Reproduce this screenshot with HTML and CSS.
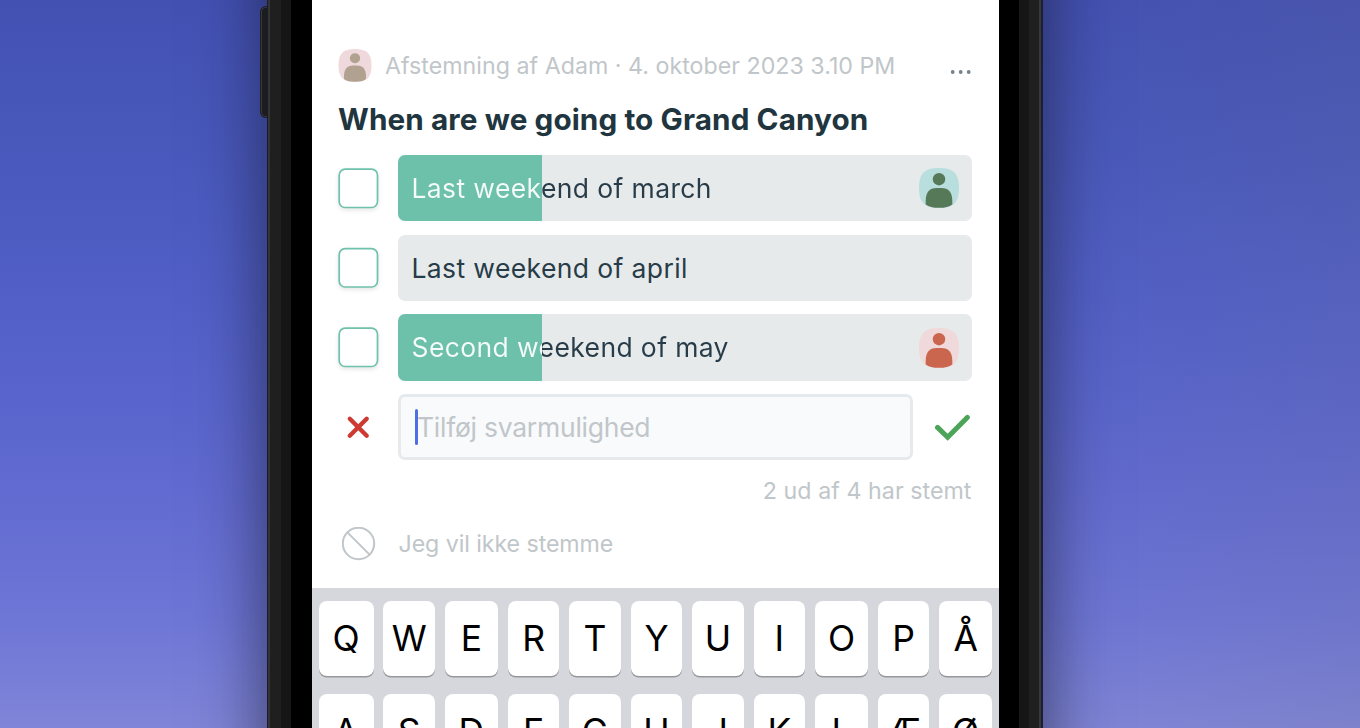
FILE: index.html
```html
<!DOCTYPE html>
<html lang="da">
<head>
<meta charset="utf-8">
<title>Afstemning</title>
<link rel="stylesheet" href="styles.css">
</head>
<body>
<svg class="defs" width="0" height="0" aria-hidden="true">
  <symbol id="person" viewBox="0 0 40 40">
    <path class="tile" d="M20 0C34.500 0 40 5.500 40 20S34.500 40 20 40 0 34.500 0 20 5.500 0 20 0Z"/>
    <circle cx="20" cy="11.200" r="6.200"/>
    <path d="M6.700 32.500C6.700 24.500 10.500 20 17.500 20H22.500C29.500 20 33.300 24.500 33.300 32.500V36.500C30.300 39 26 39.800 20 39.800S9.700 39 6.700 36.500Z"/>
  </symbol>
</svg>
<main class="stage">
  <div class="phone">
    <span class="side-button"></span>
    <div class="screen">
      <section class="poll">
        <header class="meta">
          <svg class="avatar avatar-small tan"><use href="#person"/></svg>
          <span class="byline">Afstemning af Adam · 4. oktober 2023 3.10 PM</span>
          <svg class="more" width="22" height="6" viewBox="0 0 22 6"><circle cx="2.700" cy="3" r="1.900"/><circle cx="10.700" cy="3" r="1.900"/><circle cx="18.700" cy="3" r="1.900"/></svg>
        </header>
        <h1 class="title">When are we going to Grand Canyon</h1>
        <div class="options">
          <div class="option">
            <svg class="checkbox" width="41" height="41" viewBox="0 0 41 41"><rect x="1.200" y="1.200" width="38.300" height="38.300" rx="6"/></svg>
            <div class="bar voted"><span class="label march">Last weekend of march</span><svg class="avatar green"><use href="#person"/></svg></div>
          </div>
          <div class="option">
            <svg class="checkbox" width="41" height="41" viewBox="0 0 41 41"><rect x="1.200" y="1.700" width="38.300" height="38.300" rx="6"/></svg>
            <div class="bar"><span class="label">Last weekend of april</span></div>
          </div>
          <div class="option">
            <svg class="checkbox" width="41" height="41" viewBox="0 0 41 41"><rect x="1.200" y="1.200" width="38.300" height="38.300" rx="6"/></svg>
            <div class="bar voted"><span class="label may">Second weekend of may</span><svg class="avatar red"><use href="#person"/></svg></div>
          </div>
          <div class="option">
            <span class="cancel"><svg width="24" height="24" viewBox="0 0 24 24"><path d="M3.800 3.800L20.700 20.700M20.700 3.800L3.800 20.700"/></svg></span>
            <div class="field"><span class="caret"></span><span class="placeholder">Tilføj svarmulighed</span></div>
            <svg class="confirm" width="38" height="28" viewBox="0 0 38 28"><path d="M3.500 14.400L13.700 24.300L33.300 4.400"/></svg>
          </div>
        </div>
        <p class="tally">2 ud af 4 har stemt</p>
        <div class="abstain">
          <svg width="34" height="34" viewBox="0 0 34 34"><circle cx="16.500" cy="16.500" r="15.700"/><path d="M5.400 5.400L27.600 27.600"/></svg>
          <span>Jeg vil ikke stemme</span>
        </div>
      </section>
      <div class="keyboard">
        <kbd>Q</kbd><kbd>W</kbd><kbd>E</kbd><kbd>R</kbd><kbd>T</kbd><kbd>Y</kbd><kbd>U</kbd><kbd>I</kbd><kbd>O</kbd><kbd>P</kbd><kbd>Å</kbd>
        <kbd>A</kbd><kbd>S</kbd><kbd>D</kbd><kbd>F</kbd><kbd>G</kbd><kbd>H</kbd><kbd>J</kbd><kbd>K</kbd><kbd>L</kbd><kbd>Æ</kbd><kbd>Ø</kbd>
      </div>
    </div>
  </div>
</main>
</body>
</html>
```
FILE: styles.css
```css
* { box-sizing: border-box; }
html, body { margin: 0; height: 100%; overflow: hidden; }
body { font-family: Inter, "Liberation Sans", sans-serif; }
.defs { display: block; }
.stage {
  position: relative;
  z-index: 0;
  height: 728px;
  overflow: hidden;
  padding-left: 267px;
  background:
    linear-gradient(90deg, rgba(110, 110, 130, 0) 75%, rgba(110, 110, 130, .14) 100%),
    linear-gradient(180deg, #4351b3 0%, #4858bb 20%, #515fc6 40%, #5965cc 55%, #636cd1 70%, #6e76d6 85%, #8085d8 100%);
}
.phone {
  position: relative;
  width: 776px;
  height: 728px;
  padding: 0 44px 0 45px;
  background: linear-gradient(90deg,
    #191b30 0 1.500px, #343434 1.500px 3.500px, #1f1f1f 3.500px 14px, #161616 14px 24px, #000 24px 752px,
    #161616 752px 762px, #1f1f1f 762px 772px, #383838 772px 774px, #1c1e38 774px);
}
.phone::before {
  content: "";
  position: absolute;
  z-index: -1;
  inset: -100px 0;
  box-shadow: 0 0 60px 6px rgba(20, 22, 40, .58);
}
.side-button {
  position: absolute;
  left: -6px;
  top: 7px;
  width: 8px;
  height: 110px;
  border: 1.500px solid #383838;
  border-right: 0;
  border-radius: 5px 0 0 5px;
  background: #1c1c1c;
  box-shadow: 0 0 0 1px #1a1c2e;
  clip-path: inset(-2px 2px -2px -2px);
}
.screen { width: 687px; height: 728px; background: #fff; overflow: hidden; }
.poll { height: 588px; padding: 49.500px 27px 0 26px; }
.meta { display: flex; align-items: center; height: 33px; }
.avatar { flex: none; width: 40px; height: 40px; margin-top: .4px; }
.avatar-small { width: 34px; height: 33px; margin-top: -.6px; }
.tan { fill: #b0a190; color: #f0d9dc; }
.green { fill: #567a58; color: #b9dede; }
.red { fill: #ca664e; color: #f0d9da; }
.tile { fill: currentColor; }
.byline { margin: 0 0 0 13px; font-size: 23.200px; line-height: 34px; letter-spacing: .02px; color: #c0c6c9; white-space: nowrap; }
.more { margin: 11px 0 0 auto; fill: #75828a; }
.title { margin: 16.500px 0 0; font-size: 29.700px; line-height: 40px; font-weight: 700; letter-spacing: .1px; color: #21353f; white-space: nowrap; }
.options { display: grid; gap: 13.500px; margin-top: 16px; }
.option { display: flex; align-items: center; height: 66.200px; }
.checkbox { flex: none; margin-right: 19px; fill: #fff; stroke: #6fc1ab; stroke-width: 1.700px; filter: drop-shadow(0 2px 2px rgba(0, 0, 0, .1)); }
.bar { flex: 1; height: 66.200px; display: flex; align-items: center; justify-content: space-between; padding: 0 13px 0 13.500px; border-radius: 7px; background: #e7eaea; }
.voted { background: linear-gradient(90deg, #6dc0aa 144px, #e7eaea 144px); }
.label { font-size: 26.500px; line-height: 40px; letter-spacing: .38px; color: #273c48; white-space: nowrap; }
.march, .may { background: linear-gradient(90deg, #f5fbf9 130px, #273c48 130px); background-clip: text; -webkit-background-clip: text; color: transparent; }
.cancel { flex: none; width: 60px; height: 24px; padding-left: 8px; }
.cancel svg, .confirm, .abstain svg { display: block; fill: none; stroke-linecap: round; }
.cancel svg { stroke: #cd3a32; stroke-width: 4.400px; }
.field { width: 514.500px; height: 66.200px; display: flex; align-items: center; padding-left: 14px; border: 3px solid #e7eaec; border-radius: 7px; background: #f9fafc; }
.caret { width: 3px; height: 36px; border-radius: 1.500px; background: #4f6ee6; }
.placeholder { margin-left: -1px; font-size: 26.500px; line-height: 40px; letter-spacing: -.25px; color: #c0c6c9; white-space: nowrap; }
.confirm { margin-left: 21px; flex: none; stroke: #4ba457; stroke-width: 5px; }
.tally { margin: 14.500px .5px 0 0; text-align: right; font-size: 23.200px; line-height: 32px; letter-spacing: .05px; color: #c0c6c9; }
.abstain { display: flex; align-items: center; height: 34px; margin: 20px 0 0 3.500px; gap: 23px; font-size: 23.200px; letter-spacing: -.07px; color: #c0c6c9; }
.abstain svg { stroke: #c0c6c9; stroke-width: 2px; }
.keyboard {
  display: grid;
  grid-template-columns: 55px 51.500px 53px 51.500px 51.500px 51.500px 51.500px 51.500px 53px 51.500px 52.500px;
  grid-auto-rows: 75px;
  justify-content: space-between;
  row-gap: 18px;
  height: 140px;
  padding: 13px 7px 0 6.500px;
  background: #d6d7dd;
}
kbd { display: flex; align-items: center; justify-content: center; padding-top: 1px; border-radius: 8px; background: #fff; box-shadow: 0 1.500px 0 #96979b; font: 400 35.500px/44px Inter, "Liberation Sans", sans-serif; color: #000; }
```
